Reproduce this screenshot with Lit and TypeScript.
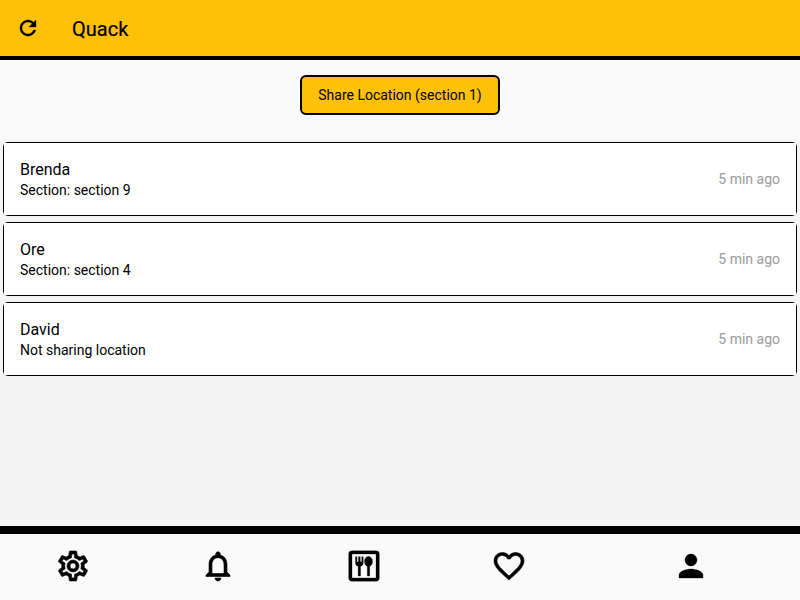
import { LitElement, html, css, svg } from "lit";
import { customElement } from "lit/decorators.js";

const icon = (d: string, size = 36, weight = 0) => html`<svg width=${size} height=${size} viewBox="0 0 24 24" fill-rule="evenodd" stroke="currentColor" stroke-width=${weight}>${svg`<path d=${d}></path>`}</svg>`;

const REFRESH = "M17.65 6.35C16.2 4.9 14.21 4 12 4c-4.42 0-7.99 3.58-7.99 8s3.57 8 7.99 8c3.73 0 6.84-2.55 7.73-6h-2.08c-.82 2.33-3.04 4-5.65 4-3.31 0-6-2.69-6-6s2.69-6 6-6c1.66 0 3.14.69 4.22 1.78L13 11h7V4l-2.35 2.35z";
const COG = "M12,8A4,4 0 0,1 16,12A4,4 0 0,1 12,16A4,4 0 0,1 8,12A4,4 0 0,1 12,8M12,10A2,2 0 0,0 10,12A2,2 0 0,0 12,14A2,2 0 0,0 14,12A2,2 0 0,0 12,10M10,22C9.75,22 9.54,21.82 9.5,21.58L9.13,18.93C8.5,18.68 7.96,18.34 7.44,17.94L4.95,18.95C4.73,19.03 4.46,18.95 4.34,18.73L2.34,15.27C2.21,15.05 2.27,14.78 2.46,14.63L4.57,12.97L4.5,12L4.57,11L2.46,9.37C2.27,9.22 2.21,8.95 2.34,8.73L4.34,5.27C4.46,5.05 4.73,4.96 4.95,5.05L7.44,6.05C7.96,5.66 8.5,5.32 9.13,5.07L9.5,2.42C9.54,2.18 9.75,2 10,2H14C14.25,2 14.46,2.18 14.5,2.42L14.87,5.07C15.5,5.32 16.04,5.66 16.56,6.05L19.05,5.05C19.27,4.96 19.54,5.05 19.66,5.27L21.66,8.73C21.79,8.95 21.73,9.22 21.54,9.37L19.43,11L19.5,12L19.43,13L21.54,14.63C21.73,14.78 21.79,15.05 21.66,15.27L19.66,18.73C19.54,18.95 19.27,19.04 19.05,18.95L16.56,17.95C16.04,18.34 15.5,18.68 14.87,18.93L14.5,21.58C14.46,21.82 14.25,22 14,22H10M11.25,4L10.88,6.61C9.68,6.86 8.62,7.5 7.85,8.39L5.44,7.35L4.69,8.65L6.8,10.2C6.4,11.37 6.4,12.64 6.8,13.8L4.68,15.36L5.43,16.66L7.86,15.62C8.63,16.5 9.68,17.14 10.87,17.38L11.24,20H12.76L13.13,17.39C14.32,17.14 15.37,16.5 16.14,15.62L18.57,16.66L19.32,15.36L17.2,13.81C17.6,12.64 17.6,11.37 17.2,10.2L19.31,8.65L18.56,7.35L16.15,8.39C15.38,7.5 14.32,6.86 13.12,6.62L12.75,4H11.25Z";
const BELL = "M12 22c1.1 0 2-.9 2-2h-4c0 1.1.9 2 2 2zm6-6v-5c0-3.07-1.63-5.64-4.5-6.32V4c0-.83-.67-1.5-1.5-1.5s-1.5.67-1.5 1.5v.68C7.64 5.36 6 7.92 6 11v5l-2 2v1h16v-1l-2-2zm-2 1H8v-6c0-2.48 1.51-4.5 4-4.5s4 2.02 4 4.5v6z";
const MEAL = "M4 1.9H20Q22.2 1.9 22.2 4V20Q22.2 22.1 20 22.1H4Q1.8 22.1 1.8 20V4Q1.8 1.9 4 1.9ZM4 4V20H20V4ZM6.3 5.8H7.3V9.2H8.3V5.8H9.5V9.2H10.5V5.8H11.5V9.8Q11.5 11.8 9.7 12.2V18.7H8.1V12.2Q6.3 11.8 6.3 9.8ZM15 5.7C16.6 5.7 17.7 7.1 17.7 9C17.7 10.6 16.9 11.8 15.8 12.2V18.7H14.2V12.2C13.1 11.8 12.3 10.6 12.3 9C12.3 7.1 13.4 5.7 15 5.7Z";
const HEART = "M16.5 3c-1.74 0-3.41.81-4.5 2.09C10.91 3.81 9.24 3 7.5 3 4.42 3 2 5.42 2 8.5c0 3.78 3.4 6.86 8.55 11.54L12 21.35l1.45-1.32C18.6 15.36 22 12.28 22 8.5 22 5.42 19.58 3 16.5 3zm-4.4 15.55l-.1.1-.1-.1C7.14 14.24 4 11.39 4 8.5 4 6.5 5.5 5 7.5 5c1.54 0 3.04.99 3.57 2.36h1.87C13.46 5.99 14.96 5 16.5 5c2 0 3.5 1.5 3.5 3.5 0 2.89-3.14 5.74-7.9 10.05z";
const PERSON = "M12 12c2.21 0 4-1.79 4-4s-1.79-4-4-4-4 1.79-4 4 1.79 4 4 4zm0 2c-2.67 0-8 1.34-8 4v2h16v-2c0-2.66-5.33-4-8-4z";

const TABS = [
  { path: COG, weight: 0.4 },
  { path: BELL, weight: 0.4 },
  { path: MEAL, weight: 0.2 },
  { path: HEART, weight: 0.4 },
  { path: PERSON, weight: 0.2 },
];

const FRIENDS = [
  { name: "Brenda", status: "Section: section 9", seen: "5 min ago" },
  { name: "Ore", status: "Section: section 4", seen: "5 min ago" },
  { name: "David", status: "Not sharing location", seen: "5 min ago" },
];

@customElement("app-root")
export class AppRoot extends LitElement {
  static styles = css`
    :host { display: flex; flex-direction: column; height: 100vh; overflow: hidden; background: #f4f4f4; color: #000; font-family: Roboto, sans-serif; }
    * { box-sizing: border-box; }
    svg { display: block; fill: currentColor; }
    header { flex: none; display: flex; align-items: center; height: 60px; padding-left: 16px; gap: 32px; background: #ffc107; border-bottom: 4px solid #000; }
    h1 { margin: 0; font-size: 20px; line-height: 24px; font-weight: 400; padding-top: 2px; -webkit-text-stroke: 0.2px; }
    .share { flex: none; display: flex; justify-content: center; height: 79px; padding-top: 15px; background: #fafafa; }
    button { font: inherit; color: inherit; }
    .share button { width: 200px; height: 40px; padding: 0; background: #ffc107; border: 2px solid #000; border-radius: 6px; font-size: 14px; }
    main { flex: 1; display: flex; flex-direction: column; gap: 6px; padding: 3px; }
    .card { border-radius: 5px; overflow: hidden; }
    .row { display: flex; align-items: center; justify-content: space-between; height: 74px; padding: 0 16px; background: #fff; border: 1px solid #000; }
    .person { padding-top: 2px; }
    .name { font-size: 16px; line-height: 20px; }
    .status { font-size: 14px; line-height: 20px; }
    .seen { font-size: 14px; line-height: 20px; color: #9a9a9a; }
    nav { flex: none; display: flex; height: 74px; background: #fafafa; border-top: 8px solid #000; }
    nav button { flex: 1; display: flex; justify-content: center; align-items: flex-start; padding: 14px 0 0; border: 0; background: none; }
    nav button:last-child { flex: 1.5; }
  `;

  render() {
    return html`
      <header>${icon(REFRESH, 24, 0.4)}<h1>Quack</h1></header>
      <section class="share"><button>Share Location (section 1)</button></section>
      <main>
        ${FRIENDS.map((f) => html`
          <article class="card">
            <div class="row">
              <div class="person"><div class="name">${f.name}</div><div class="status">${f.status}</div></div>
              <div class="seen">${f.seen}</div>
            </div>
          </article>`)}
      </main>
      <nav>${TABS.map((t) => html`<button>${icon(t.path, 36, t.weight)}</button>`)}</nav>
    `;
  }
}
